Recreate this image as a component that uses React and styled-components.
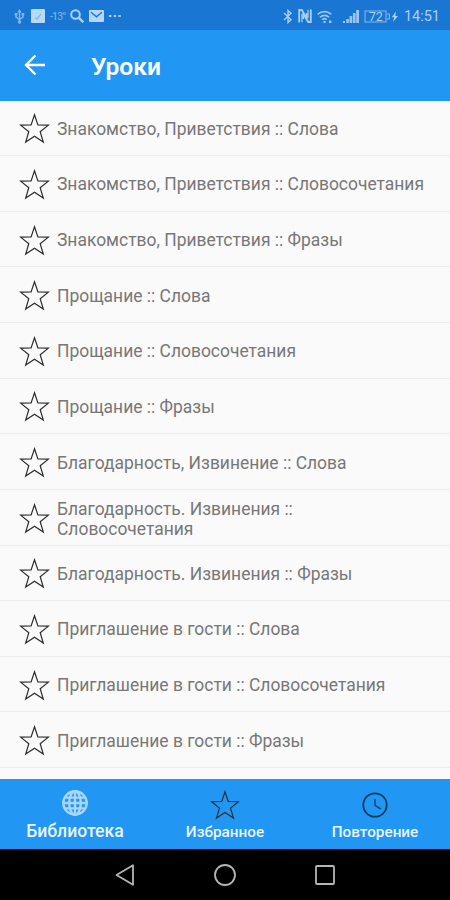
import React from 'react';
import styled, { createGlobalStyle } from 'styled-components';

const GlobalStyle = createGlobalStyle`
  body {
    margin: 0;
    background-color: #fafafa;
    font-family: Roboto, 'Liberation Sans', sans-serif;
  }
`;

const Screen = styled.div`
  width: 450px;
  height: 900px;
  display: flex;
  flex-direction: column;
  overflow: hidden;
`;

const StatusBar = styled.div`
  height: 30px;
  flex: none;
  box-sizing: border-box;
  padding: 2px 10px 0 14px;
  display: flex;
  align-items: center;
  justify-content: space-between;
  background-color: #1976d2;
  color: #a9cff3;
`;

const StatusGroup = styled.div`
  display: flex;
  align-items: center;
  gap: 5px;

  svg {
    display: block;
  }
`;

const StatusSpacer = styled.span`
  width: 1px;
`;

const Temperature = styled.span`
  width: 15px;
  font-size: 10.5px;
  letter-spacing: -0.8px;
  color: #83b6e8;
`;

const Clock = styled.span`
  margin-top: 2px;
  font-size: 14.5px;
  line-height: 16px;
`;

const Header = styled.header`
  height: 70.5px;
  flex: none;
  box-sizing: border-box;
  padding: 0 24px;
  display: flex;
  align-items: center;
  gap: 45px;
  background-color: #2196f3;
  color: #fff;
`;

const Title = styled.h1`
  margin: 4px 0 0;
  font-size: 24.6px;
  line-height: 30px;
  font-weight: 600;
`;

const Lessons = styled.ul`
  flex: 1;
  min-height: 0;
  margin: 0;
  padding: 0;
  list-style: none;
  background-color: #fafafa;
`;

const Lesson = styled.li`
  height: 55.64px;
  box-sizing: border-box;
  padding: 2px 20px 0 19px;
  display: flex;
  align-items: center;
  gap: 7px;
  border-bottom: 1.5px solid #ececec;
`;

const LessonName = styled.span`
  padding-top: ${({ $twoLines }) => ($twoLines ? 2 : 0)}px;
  font-size: 17.45px;
  line-height: 20px;
  color: #777;
  white-space: pre-line;
`;

const Tabs = styled.nav`
  height: 70px;
  flex: none;
  display: grid;
  grid-template-columns: repeat(3, 1fr);
  background-color: #2196f3;
`;

const Tab = styled.div`
  box-sizing: border-box;
  padding-bottom: ${({ $active }) => ($active ? 8 : 7)}px;
  display: flex;
  flex-direction: column;
  align-items: center;
  justify-content: flex-end;
`;

const TabIcon = styled.div`
  height: 30px;
  margin-bottom: ${({ $active }) => ($active ? 3 : 2)}px;
  display: flex;
  align-items: center;
`;

const TabLabel = styled.span`
  font-size: ${({ $active }) => ($active ? 17.6 : 15.3)}px;
  line-height: 20px;
  font-weight: 500;
  color: #e9f5ff;
`;

const SystemBar = styled.div`
  height: 51px;
  flex: none;
  display: flex;
  align-items: center;
  justify-content: center;
  gap: 76px;
  background-color: #000;
`;

const Star = ({ size = 31 }) => (
  <svg width={size} height={size} viewBox="0 0 31 31" fill="none" stroke="#2c2c2c" strokeWidth="1.2">
    <path d="M15.5 1.8 L18.9 11.9 L29.4 12.1 L21.2 18.7 L24.3 29 L15.5 23.2 L6.7 29 L9.8 18.7 L1.6 12.1 L12.1 11.9 Z" />
  </svg>
);

const BackArrow = () => (
  <svg width="22" height="22" viewBox="0 0 22 22" fill="none" stroke="currentColor" strokeWidth="2.3">
    <path d="M21 11H2.5M11.5 1.5L2 11l9.5 9.5" />
  </svg>
);

const Globe = () => (
  <svg width="26" height="26" viewBox="0 0 26 26" fill="none" stroke="#a9d7fb" strokeWidth="2.4">
    <circle cx="13" cy="13" r="11.7" />
    <ellipse cx="13" cy="13" rx="5.8" ry="11.7" />
    <path d="M13 1v24M1 13h24M3 7.6h20M3 18.4h20" />
  </svg>
);

const History = () => (
  <svg width="26" height="26" viewBox="0 0 26 26" fill="none" stroke="#0d3c61" strokeWidth="1.8">
    <circle cx="13" cy="13" r="11.7" />
    <path d="M13 7v6.3l5.8 3.7" stroke="#124a78" strokeWidth="1.6" />
  </svg>
);

const Usb = () => (
  <svg width="11" height="15" viewBox="0 0 11 15" fill="none" stroke="#83b6e8" strokeWidth="1.5">
    <path d="M5.5 2v11M2 5v3l3.5 2.5L9 8V5" />
    <path d="M5.5 0L3.3 3.5h4.4zM.7 4h2.7v2.5H.7zM7.6 4h2.7v2.5H7.6z" fill="#83b6e8" stroke="none" />
    <circle cx="5.5" cy="13" r="1.7" fill="#83b6e8" stroke="none" />
  </svg>
);

const AppBadge = () => (
  <svg width="15" height="14" viewBox="0 0 15 14">
    <rect x="1" width="14" height="14" rx="1" fill="#b9d9f6" />
    <path d="M5 9l2 1 4-5" fill="none" stroke="#7db2e6" strokeWidth="1.2" />
  </svg>
);

const Search = () => (
  <svg width="14" height="14" viewBox="0 0 14 14" fill="none" stroke="currentColor" strokeWidth="2">
    <circle cx="5.5" cy="5.5" r="4.3" />
    <path d="M8.7 8.7l4.6 4.6" strokeWidth="2.4" />
  </svg>
);

const Mail = () => (
  <svg width="15" height="12" viewBox="0 0 15 12">
    <rect width="15" height="12" rx="1" fill="#b5d6f5" />
    <path d="M2 2.3l5.5 4.5L13 2.3" fill="none" stroke="#1976d2" strokeWidth="1.4" />
  </svg>
);

const Dots = () => (
  <svg width="12" height="2" viewBox="0 0 12 2" fill="currentColor">
    <path d="M0 0h2.4v2H0zM4.7 0h2.4v2H4.7zM9.4 0h2.4v2H9.4z" />
  </svg>
);

const Bluetooth = () => (
  <svg width="10" height="15" viewBox="0 0 10 15" fill="none" stroke="currentColor" strokeWidth="1.4">
    <path d="M1 4l7 6.7L5 13.5v-12l3 2.8L1 11" />
  </svg>
);

const Nfc = () => (
  <svg width="14" height="14" viewBox="0 0 14 14" fill="none" stroke="currentColor" strokeWidth="1.8">
    <path d="M1.2 13.5V1h2.6l5 8.5V4M12.8.5V13h-2.6l-5-8.5V10" />
    <path d="M4 13.3V5M10 .7V9" strokeWidth="1.2" />
  </svg>
);

const Wifi = () => (
  <svg width="15" height="13" viewBox="0 0 15 13" fill="none" stroke="#9bc6f0" strokeWidth="1.6">
    <path d="M.7 4.3c3.8-3.6 9.8-3.6 13.6 0M3 7.2c2.5-2.5 6.5-2.5 9 0M5.3 9.8c1.2-1.2 3.2-1.2 4.4 0" />
    <path d="M6.4 11h2.2v2H6.4zM12 10.6h2.4V13H12z" fill="#9bc6f0" stroke="none" />
  </svg>
);

const Signal = () => (
  <svg width="16" height="13" viewBox="0 0 16 13" fill="#9bc6f0">
    <path d="M0 11h2v2H0zM3.2 9h2.6v4H3.2zM6.5 6h2.7v7H6.5zM9.9 3h2.7v10H9.9zM13.2 0H16v13h-2.8z" />
  </svg>
);

const Battery = () => (
  <svg width="35" height="13" viewBox="0 0 35 13">
    <path d="M1 1h21v11H1zM23 4h2.3v5H23" fill="none" stroke="#83b6e8" strokeWidth="1.1" />
    <text x="11.8" y="11" textAnchor="middle" fontSize="12.5" fill="#a9cff3">72</text>
    <path d="M31.8 1.5l-4 5.7h2.4L29 12l5-5.9h-2.6z" fill="#a9cff3" />
  </svg>
);

const lessons = [
  'Знакомство, Приветствия :: Слова',
  'Знакомство, Приветствия :: Словосочетания',
  'Знакомство, Приветствия :: Фразы',
  'Прощание :: Слова',
  'Прощание :: Словосочетания',
  'Прощание :: Фразы',
  'Благодарность, Извинение :: Слова',
  'Благодарность. Извинения ::\nСловосочетания',
  'Благодарность. Извинения :: Фразы',
  'Приглашение в гости :: Слова',
  'Приглашение в гости :: Словосочетания',
  'Приглашение в гости :: Фразы',
];

const App = () => {
  return (
    <>
      <GlobalStyle />
      <Screen>
        <StatusBar>
          <StatusGroup>
            <Usb />
            <AppBadge />
            <Temperature>-13°</Temperature>
            <Search />
            <Mail />
            <Dots />
          </StatusGroup>
          <StatusGroup>
            <Bluetooth />
            <Nfc />
            <Wifi />
            <StatusSpacer />
            <Signal />
            <Battery />
            <Clock>14:51</Clock>
          </StatusGroup>
        </StatusBar>
        <Header>
          <BackArrow />
          <Title>Уроки</Title>
        </Header>
        <Lessons>
          {lessons.map((name) => (
            <Lesson key={name}>
              <Star />
              <LessonName $twoLines={name.includes('\n')}>{name}</LessonName>
            </Lesson>
          ))}
        </Lessons>
        <Tabs>
          <Tab $active>
            <TabIcon $active>
              <Globe />
            </TabIcon>
            <TabLabel $active>Библиотека</TabLabel>
          </Tab>
          <Tab>
            <TabIcon>
              <Star size={30} />
            </TabIcon>
            <TabLabel>Избранное</TabLabel>
          </Tab>
          <Tab>
            <TabIcon>
              <History />
            </TabIcon>
            <TabLabel>Повторение</TabLabel>
          </Tab>
        </Tabs>
        <SystemBar>
          <svg width="24" height="24" viewBox="0 0 24 24" fill="none" stroke="#b5b5b5" strokeWidth="1.8">
            <path d="M20 2.2v19.6L3.5 12z" strokeLinejoin="round" />
          </svg>
          <svg width="24" height="24" viewBox="0 0 24 24" fill="none" stroke="#b5b5b5" strokeWidth="1.8">
            <circle cx="12" cy="12" r="10" />
          </svg>
          <svg width="24" height="24" viewBox="0 0 24 24" fill="none" stroke="#b5b5b5" strokeWidth="1.8">
            <rect x="3" y="3" width="18" height="18" rx="1" />
          </svg>
        </SystemBar>
      </Screen>
    </>
  );
};

export default App;
